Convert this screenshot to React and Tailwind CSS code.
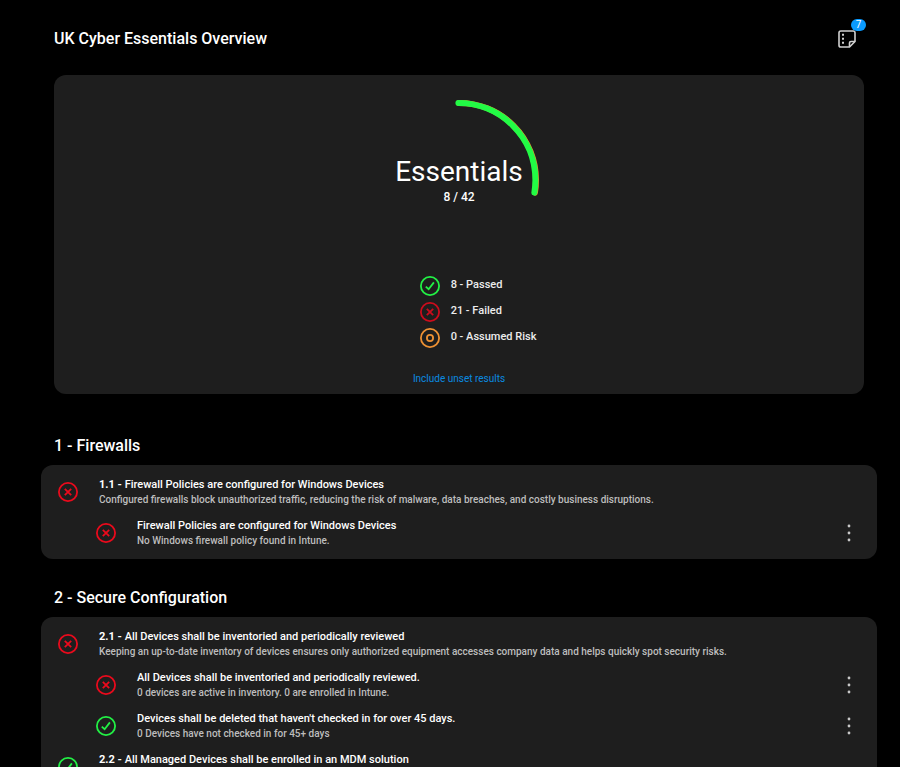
import React, { useState } from 'react';

const sections = [
  {
    title: '1 - Firewalls',
    controls: [
      {
        id: '1.1',
        title: 'Firewall Policies are configured for Windows Devices',
        description: 'Configured firewalls block unauthorized traffic, reducing the risk of malware, data breaches, and costly business disruptions.',
        status: 'failed',
        checks: [
          {
            title: 'Firewall Policies are configured for Windows Devices',
            description: 'No Windows firewall policy found in Intune.',
            status: 'failed',
          },
        ],
      },
    ],
  },
  {
    title: '2 - Secure Configuration',
    controls: [
      {
        id: '2.1',
        title: 'All Devices shall be inventoried and periodically reviewed',
        description: 'Keeping an up-to-date inventory of devices ensures only authorized equipment accesses company data and helps quickly spot security risks.',
        status: 'failed',
        checks: [
          {
            title: 'All Devices shall be inventoried and periodically reviewed.',
            description: '0 devices are active in inventory. 0 are enrolled in Intune.',
            status: 'failed',
          },
          {
            title: "Devices shall be deleted that haven't checked in for over 45 days.",
            description: '0 Devices have not checked in for 45+ days',
            status: 'passed',
          },
        ],
      },
      {
        id: '2.2',
        title: 'All Managed Devices shall be enrolled in an MDM solution',
        description: '',
        status: 'passed',
        checks: [],
      },
    ],
  },
];

const totals = { passed: 8, failed: 21, risk: 0, all: 42 };

const statusColor = {
  passed: 'text-[#22f045]',
  failed: 'text-[#ea0a1c]',
  risk: 'text-[#ee9133]',
};

function StatusIcon({ status, className = '' }) {
  return (
    <svg
      viewBox="0 0 20 20"
      fill="none"
      stroke="currentColor"
      strokeWidth="1.8"
      className={`size-5 shrink-0 ${statusColor[status]} ${className}`}
    >
      <circle cx="10" cy="10" r="9.1" />
      {status === 'passed' && <path d="M5.8 10.6 8.6 13.2 13.9 6.4" />}
      {status === 'failed' && <path d="M6.8 6.8 13.2 13.2M13.2 6.8 6.8 13.2" />}
      {status === 'risk' && <circle cx="10" cy="10" r="3.1" />}
    </svg>
  );
}

// Ring of passed results against everything that has been answered
function Ring() {
  const radius = 77;
  const length = 2 * Math.PI * radius;
  const part = totals.passed / (totals.passed + totals.failed + totals.risk);

  return (
    <svg viewBox="0 0 160 160" fill="none" strokeLinecap="round" className="size-40">
      <g transform="rotate(-90 80 80)" strokeWidth="6" strokeDasharray={`${length * part} ${length}`}>
        <circle cx="80" cy="80" r={radius} stroke="#e68a2e" />
        <circle cx="80" cy="79.4" r={radius} stroke="#22fb45" />
      </g>
    </svg>
  );
}

function Row({ id, title, description, status, nested }) {
  return (
    <li className={`flex h-[41px] items-center pr-4 ${nested ? 'pl-[55px]' : 'pl-[17px]'}`}>
      <StatusIcon status={status} />
      <div className="min-w-0 flex-1 pl-[21px] font-medium whitespace-nowrap">
        <p className="text-[11px] leading-4 text-white">
          {id && <span className="font-bold">{id} - </span>}
          {title}
        </p>
        <p className="h-[13px] text-[10px] leading-[13px] text-[#bdbdbd]">{description}</p>
      </div>
      {nested && (
        <button type="button" aria-label={`Options for ${title}`} className="flex w-6 justify-center text-[#c8c8c8]">
          <svg viewBox="0 0 4 20" fill="currentColor" className="h-5 w-1">
            <circle cx="2" cy="3" r="1.4" />
            <circle cx="2" cy="10" r="1.4" />
            <circle cx="2" cy="17" r="1.4" />
          </svg>
        </button>
      )}
    </li>
  );
}

function Section({ title, controls }) {
  return (
    <section className="pb-[27px]">
      <h2 className="mb-[7px] px-[13px] text-base leading-6 font-medium">{title}</h2>
      <ul className="rounded-xl bg-[#1e1e1e] py-[6px]">
        {controls.map((control) => (
          <React.Fragment key={control.id}>
            <Row {...control} />
            {control.checks.map((check) => (
              <Row key={check.title} {...check} nested />
            ))}
          </React.Fragment>
        ))}
      </ul>
    </section>
  );
}

export default function App() {
  const [includeUnset, setIncludeUnset] = useState(false);

  return (
    <main className="h-screen overflow-y-auto bg-black pr-[23px] pl-[41px] font-[Roboto,sans-serif] text-white [scrollbar-width:none]">
      <header className="flex h-[75px] items-center justify-between px-[13px] pt-[2px]">
        <h1 className="text-base leading-6 font-medium">UK Cyber Essentials Overview</h1>
        <button type="button" aria-label="Notes" className="relative mr-2 text-[#d0d0d0]">
          <svg viewBox="0 0 18 18" fill="none" stroke="currentColor" strokeWidth="1.6" className="size-[18px]">
            <path d="M2.8 1H15.2Q17 1 17 2.8V11.5L11.5 17H2.8Q1 17 1 15.2V2.8Q1 1 2.8 1Z" />
            <path d="M17 11.5H13Q11.5 11.5 11.5 13V17" />
            <path d="M4 4.8H6M4 8.8H6M4 12.8H6" strokeWidth="2" />
          </svg>
          <span className="absolute -top-[11px] left-[13px] flex h-3 w-[15px] items-center justify-center rounded-full bg-[#0a9bff] text-[10px] leading-3 text-white">
            7
          </span>
        </button>
      </header>

      <div className="mx-[13px] mb-10 flex flex-col items-center rounded-xl bg-[#1e1e1e] pt-[25px] pb-[7px]">
        <div className="relative size-40">
          <Ring />
          <div className="absolute inset-0 flex flex-col items-center justify-center gap-[1px] pt-[1px] whitespace-nowrap">
            <p className="text-[28px] leading-8">Essentials</p>
            <p className="text-[12px] leading-4 font-medium">
              {totals.passed} / {totals.all}
            </p>
          </div>
        </div>

        <ul className="mt-[13px] flex flex-col gap-[1px] pl-[38px] text-[11px] font-medium text-[#ececec]">
          <li className="flex h-[25px] items-center gap-[11px]">
            <StatusIcon status="passed" />
            {totals.passed} - Passed
          </li>
          <li className="flex h-[25px] items-center gap-[11px]">
            <StatusIcon status="failed" className="opacity-85" />
            {totals.failed} - Failed
          </li>
          <li className="flex h-[25px] items-center gap-[11px]">
            <StatusIcon status="risk" />
            {totals.risk} - Assumed Risk
          </li>
        </ul>

        <button
          type="button"
          onClick={() => setIncludeUnset(!includeUnset)}
          aria-pressed={includeUnset}
          className="mt-[21px] text-[10px] leading-4 text-[#0a8be0]"
        >
          Include unset results
        </button>
      </div>

      {sections.map((section) => (
        <Section key={section.title} {...section} />
      ))}
    </main>
  );
}
